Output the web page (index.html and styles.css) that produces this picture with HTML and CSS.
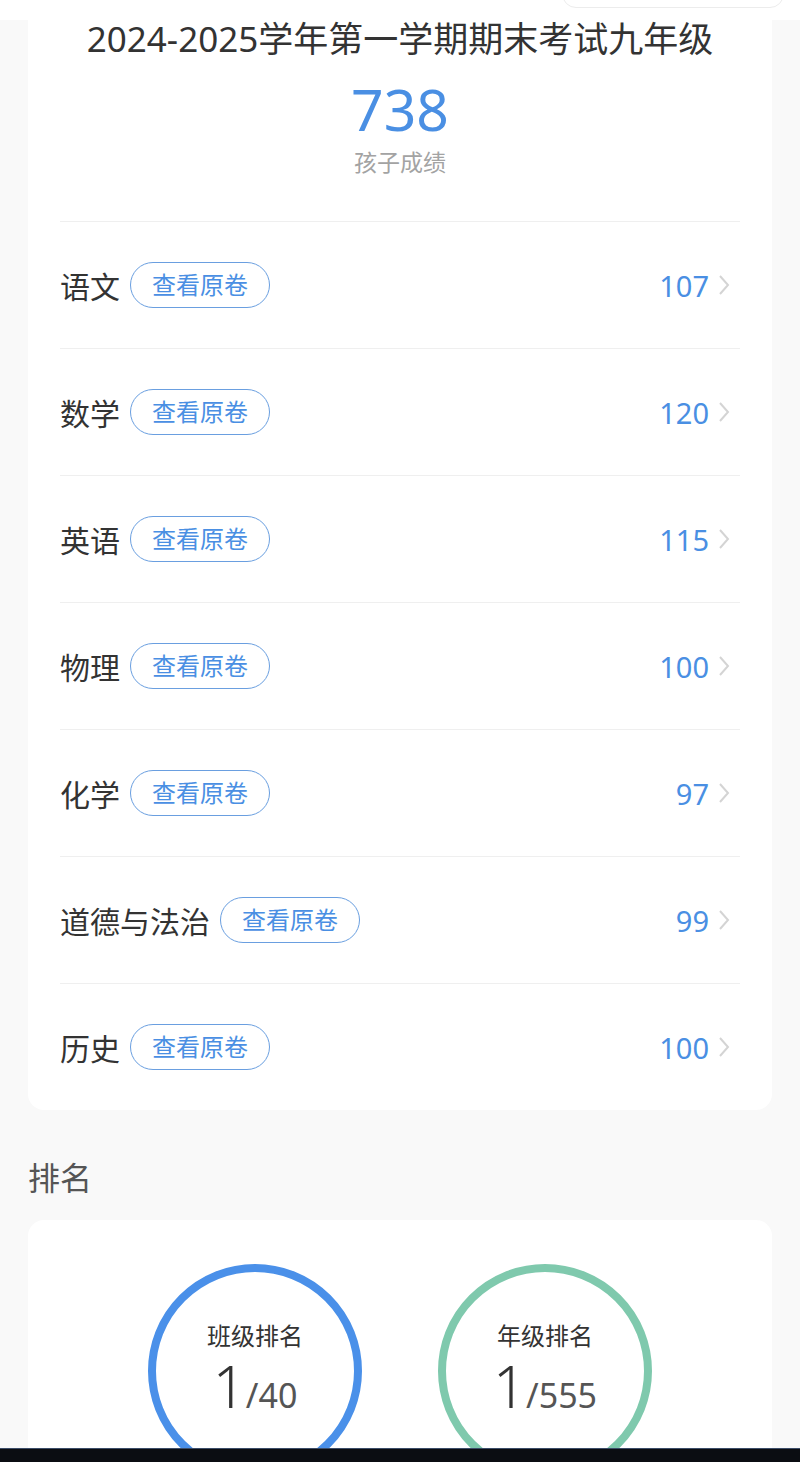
FILE: index.html
```html
<!DOCTYPE html>
<html lang="zh-CN">
<head>
  <meta charset="UTF-8" />
  <meta name="viewport" content="width=device-width, initial-scale=1.0"/>
  <title>孩子成绩</title>
  <link rel="stylesheet" href="styles.css">
</head>
<body>
  <div class="topbar">
    <div class="top-pill"></div>
  </div>

  <div class="card score-card">
    <div class="summary">
      <h1 class="exam-title">2024-2025学年第一学期期末考试九年级</h1>
      <div class="total">738</div>
      <div class="total-label">孩子成绩</div>
    </div>

    <div class="subject-list">
      <div class="subject-row">
        <span class="subject-name">语文</span>
        <span class="paper-btn">查看原卷</span>
        <span class="subject-score">107</span>
        <svg class="chevron" viewBox="0 0 12 22" width="12" height="22"><path d="M2 2l8 9-8 9" fill="none" stroke="#d4d4d4" stroke-width="2"/></svg>
      </div>
      <div class="subject-row">
        <span class="subject-name">数学</span>
        <span class="paper-btn">查看原卷</span>
        <span class="subject-score">120</span>
        <svg class="chevron" viewBox="0 0 12 22" width="12" height="22"><path d="M2 2l8 9-8 9" fill="none" stroke="#d4d4d4" stroke-width="2"/></svg>
      </div>
      <div class="subject-row">
        <span class="subject-name">英语</span>
        <span class="paper-btn">查看原卷</span>
        <span class="subject-score">115</span>
        <svg class="chevron" viewBox="0 0 12 22" width="12" height="22"><path d="M2 2l8 9-8 9" fill="none" stroke="#d4d4d4" stroke-width="2"/></svg>
      </div>
      <div class="subject-row">
        <span class="subject-name">物理</span>
        <span class="paper-btn">查看原卷</span>
        <span class="subject-score">100</span>
        <svg class="chevron" viewBox="0 0 12 22" width="12" height="22"><path d="M2 2l8 9-8 9" fill="none" stroke="#d4d4d4" stroke-width="2"/></svg>
      </div>
      <div class="subject-row">
        <span class="subject-name">化学</span>
        <span class="paper-btn">查看原卷</span>
        <span class="subject-score">97</span>
        <svg class="chevron" viewBox="0 0 12 22" width="12" height="22"><path d="M2 2l8 9-8 9" fill="none" stroke="#d4d4d4" stroke-width="2"/></svg>
      </div>
      <div class="subject-row">
        <span class="subject-name">道德与法治</span>
        <span class="paper-btn">查看原卷</span>
        <span class="subject-score">99</span>
        <svg class="chevron" viewBox="0 0 12 22" width="12" height="22"><path d="M2 2l8 9-8 9" fill="none" stroke="#d4d4d4" stroke-width="2"/></svg>
      </div>
      <div class="subject-row">
        <span class="subject-name">历史</span>
        <span class="paper-btn">查看原卷</span>
        <span class="subject-score">100</span>
        <svg class="chevron" viewBox="0 0 12 22" width="12" height="22"><path d="M2 2l8 9-8 9" fill="none" stroke="#d4d4d4" stroke-width="2"/></svg>
      </div>
    </div>
  </div>

  <h2 class="section-title">排名</h2>

  <div class="card rank-card">
    <div class="rank-ring ring-class">
      <div class="rank-label">班级排名</div>
      <div class="rank-value"><span class="rank-num">1</span><span class="rank-total">/40</span></div>
    </div>
    <div class="rank-ring ring-grade">
      <div class="rank-label">年级排名</div>
      <div class="rank-value"><span class="rank-num">1</span><span class="rank-total">/555</span></div>
    </div>
  </div>

  <div class="navbar"></div>
</body>
</html>
```

FILE: styles.css
```css
body {
  font-family: "Noto Sans", "Noto Sans CJK SC", sans-serif;
  background-color: #f9f9f9;
  margin: 0;
  padding: 0;
  color: #333;
}
.topbar {
  height: 20px;
  background-color: #fff;
  display: flex;
  justify-content: flex-end;
  overflow: hidden;
}
.top-pill {
  width: 220px;
  height: 26px;
  margin-top: -20px;
  margin-right: 16px;
  border: 1px solid #ececec;
  border-radius: 14px;
  background-color: #fff;
}
.card {
  background-color: #fff;
  margin: 0 28px;
  border-radius: 16px;
}
.score-card {
  border-top-left-radius: 0;
  border-top-right-radius: 0;
}
.summary {
  text-align: center;
  padding-bottom: 44px;
}
.exam-title {
  margin: 0;
  font-size: 35px;
  font-weight: 400;
  line-height: 38px;
  color: #333;
}
.total {
  margin-top: 17px;
  font-size: 57px;
  line-height: 68px;
  color: #4a8fe3;
}
.total-label {
  margin-top: 4px;
  font-size: 23px;
  line-height: 30px;
  color: #a3a3a3;
}
.subject-list {
  padding: 0 32px;
}
.subject-row {
  display: flex;
  align-items: center;
  height: 126px;
  border-top: 1px solid #efefef;
  padding-right: 10px;
}
.subject-name {
  font-size: 30px;
  color: #333;
}
.paper-btn {
  margin-left: 10px;
  padding: 0 21px;
  height: 44px;
  line-height: 44px;
  border: 1px solid #6a9fe0;
  border-radius: 23px;
  font-size: 24px;
  color: #4a8fe3;
}
.subject-score {
  margin-left: auto;
  margin-right: 9px;
  font-size: 29px;
  color: #4a8fe3;
}
.chevron {
  display: block;
}
.section-title {
  margin: 48px 28px 22px;
  font-size: 32px;
  font-weight: 400;
  line-height: 40px;
  color: #555;
}
.rank-card {
  display: flex;
  justify-content: center;
  gap: 76px;
  padding: 44px 0 60px;
}
.rank-ring {
  width: 214px;
  height: 214px;
  box-sizing: border-box;
  border: 8px solid #4a90e9;
  border-radius: 50%;
  text-align: center;
  padding-top: 48px;
}
.ring-grade {
  border-color: #7fc9ad;
}
.rank-label {
  font-size: 24px;
  line-height: 32px;
  color: #333;
}
.rank-value {
  margin-top: 4px;
  line-height: 60px;
}
.rank-num {
  font-size: 58px;
  font-weight: 300;
  color: #333;
}
.rank-total {
  font-size: 34px;
  color: #555;
}
.navbar {
  position: fixed;
  left: 0;
  right: 0;
  bottom: 0;
  height: 13px;
  background-color: #0b0d12;
  border-top: 1px solid #3b4c68;
}
```
